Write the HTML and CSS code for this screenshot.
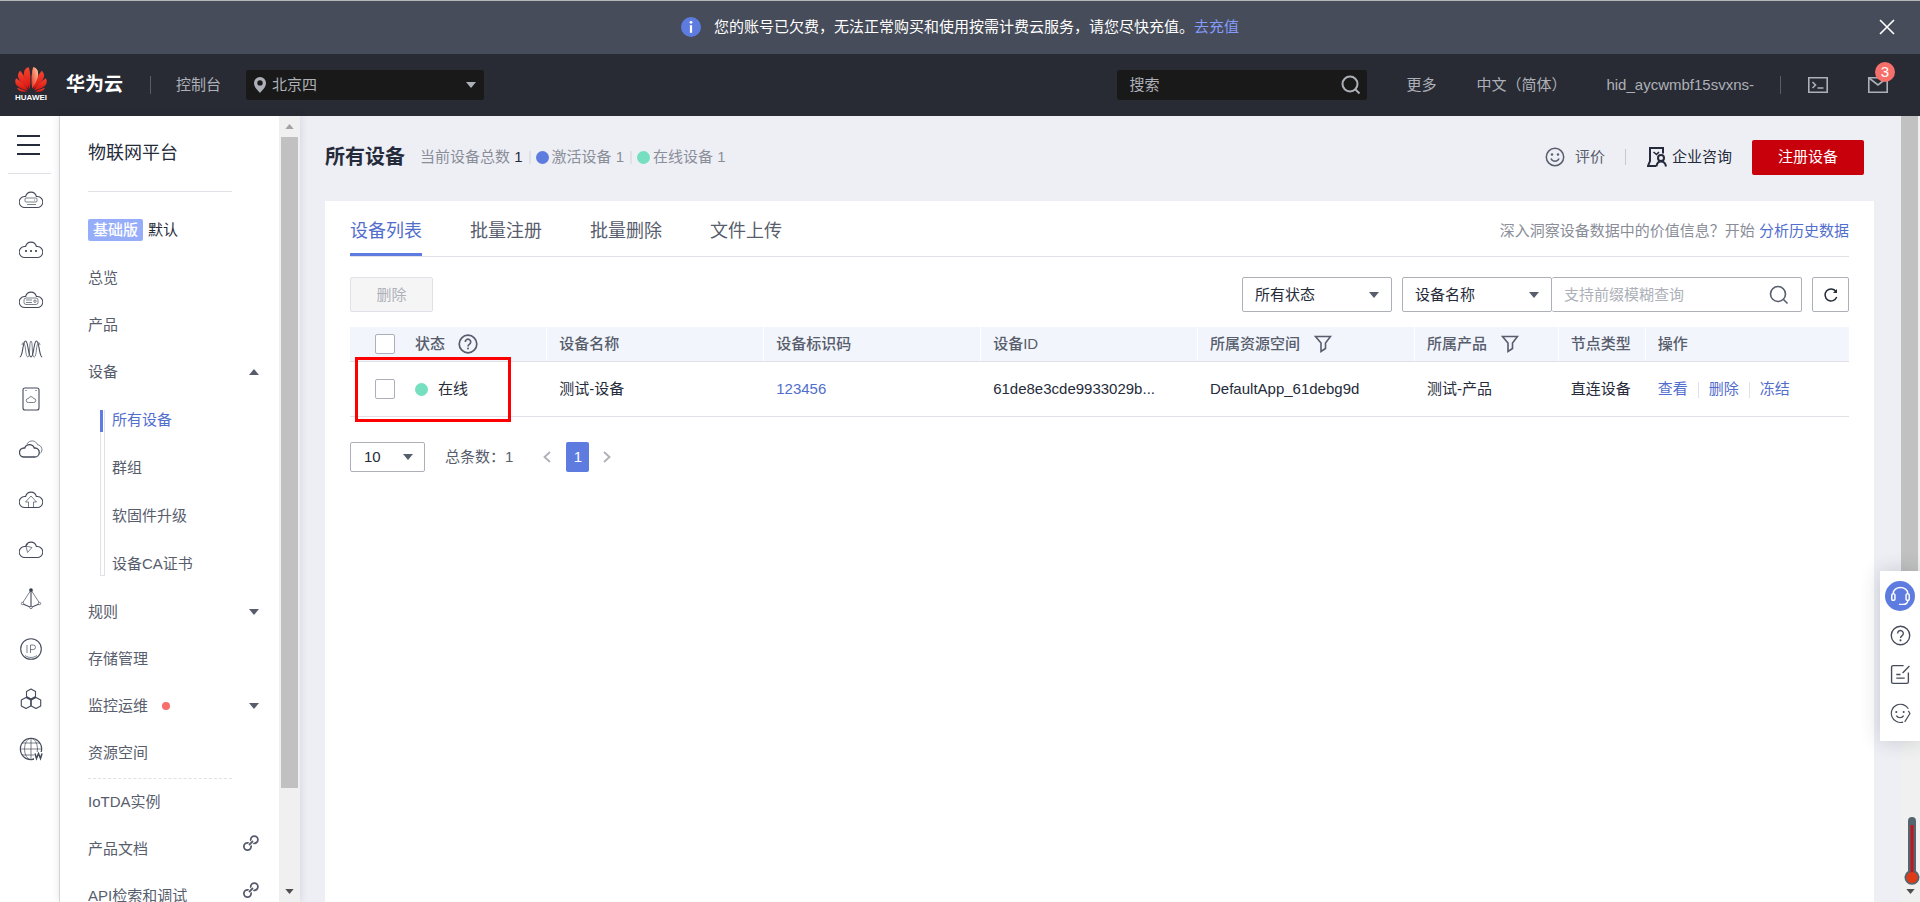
FILE: index.html
```html
<!DOCTYPE html>
<html lang="zh-CN">
<head>
<meta charset="utf-8">
<title>设备接入 - 所有设备</title>
<link rel="stylesheet" href="styles.css">
</head>
<body>
<svg class="defs" width="0" height="0" aria-hidden="true">
  <defs>
    <linearGradient id="petal" x1="0" y1="0" x2="0" y2="1"><stop offset="0" stop-color="#f6452f"/><stop offset="1" stop-color="#d8140f"/></linearGradient>
    <linearGradient id="petal-light" x1="1" y1="0" x2="0" y2="1"><stop offset="0" stop-color="#fbd0a8"/><stop offset="1" stop-color="#e8301f"/></linearGradient>
    <symbol id="cloud" viewBox="0 0 24 24"><path d="M6 20.5h12a5.5 5.5 0 0 0 .6-11h-1.200a5.600 6 0 0 0-10.800 0H5.400a5.500 5.500 0 0 0 .6 11z"/></symbol>
    <symbol id="caret" viewBox="0 0 10 6"><path d="M0 0h10L5 6z" fill="currentColor"/></symbol>
    <symbol id="funnel" viewBox="0 0 18 18"><path d="M1.500 1.500h15l-5 6.500v5.500L7 16.500V8z" fill="none" stroke="currentColor" stroke-width="1.600"/></symbol>
    <symbol id="search" viewBox="0 0 20 20"><g fill="none" stroke="currentColor"><circle cx="9" cy="9" r="7.500"/><path d="M14.500 14.500l4 4"/></g></symbol>
    <symbol id="chain" viewBox="0 0 16 16"><g fill="none" stroke="#575d6c" stroke-width="1.800"><circle cx="11.300" cy="4.700" r="3.600"/><circle cx="4.500" cy="11.500" r="3.600"/></g><path d="M6.300 9.700l3.500-3.500" stroke="#fff" stroke-width="3.600"/><path d="M6 10l4-4" stroke="#575d6c" stroke-width="1.800"/></symbol>
    <symbol id="help" viewBox="0 0 20 20"><circle cx="10" cy="10" r="8.800" fill="none" stroke="currentColor"/><path d="M7.300 8a2.700 2.700 0 1 1 4.300 2.100c-1 .7-1.600 1.100-1.600 2.300" fill="none" stroke="currentColor"/><circle cx="10" cy="14.600" r="1" fill="currentColor"/></symbol>
    <symbol id="wing" viewBox="0 0 32 25">
      <path d="M14.900 21.500C10.500 15 7.800 9 9.300 4c.8-2.300 2.700-3.500 4.600-3.700 1.700 6 1.800 13 1 21.200z"/>
      <path d="M13.900 22.300C8 18 2.300 12.500 3 7.800c.3-1.800 1.200-3.200 2.300-4C9.500 9 12.500 15 13.900 22.300z"/>
      <path d="M13 23.300C6.500 22 .8 19.500.3 15.200c-.2-1.700.2-3 .9-4 4.500 3 9 7.200 11.800 12.100z"/>
      <path d="M12.200 24.200c-3.200.9-6 .9-8-.6-1.100-.8-1.800-1.800-2.100-2.900 3.200 1.200 6.900 2.200 10.100 3.500z"/>
    </symbol>
  </defs>
</svg>

<div class="notice" role="alert">
  <svg class="notice-icon" viewBox="0 0 20 20"><circle cx="10" cy="10" r="10" fill="#5e7ce0"/><circle cx="10" cy="5.300" r="1.400" fill="#fff"/><path d="M10 8.200v7.600" stroke="#fff" stroke-width="2.200"/></svg>
  <span>您的账号已欠费，无法正常购买和使用按需计费云服务，请您尽快充值。<a class="notice-link" href="#">去充值</a></span>
  <button class="notice-close" type="button" aria-label="关闭"><svg viewBox="0 0 16 16"><path d="M1 1l14 14M15 1L1 15" stroke="#fff" stroke-width="1.600"/></svg></button>
</div>

<header class="topbar">
  <a class="logo" href="#">
    <svg class="logo-mark" viewBox="0 0 32 25">
      <g fill="url(#petal)">
        <use href="#wing" width="32" height="25"/>
        <use href="#wing" width="32" height="25" transform="translate(32 0) scale(-1 1)"/>
      </g>
      <path d="M17.100 21.500C21.500 15 24.200 9 22.700 4c-.8-2.300-2.700-3.500-4.600-3.700-1.700 6-1.800 13-1 21.200z" fill="url(#petal-light)"/>
    </svg>
    <span class="logo-text">HUAWEI</span>
  </a>
  <a class="brand" href="#">华为云</a>
  <span class="bar"></span>
  <a class="console" href="#">控制台</a>
  <label class="region">
    <svg class="pin" viewBox="0 0 12 16"><path d="M6 0a6 6 0 0 1 6 6c0 4-3.500 7-6 10C3.500 13 0 10 0 6a6 6 0 0 1 6-6zm0 3.200a2.700 2.700 0 1 0 0 5.400 2.700 2.700 0 0 0 0-5.400z" fill="#adb0b8" fill-rule="evenodd"/></svg>
    <select aria-label="区域"><option>北京四</option></select>
    <svg class="caret"><use href="#caret"/></svg>
  </label>
  <div class="top-right">
    <label class="top-search"><input type="text" placeholder="搜索" aria-label="搜索"><svg><use href="#search"/></svg></label>
    <a href="#">更多</a>
    <a href="#">中文（简体）</a>
    <a href="#">hid_aycwmbf15svxns-</a>
    <span class="bar bar-right"></span>
    <a class="top-icon" href="#" aria-label="命令行"><svg viewBox="0 0 20 20"><g fill="none" stroke="currentColor" stroke-width="1.600"><path d="M.8 2.800h18.400v14.400H.8z"/><path d="M4.500 7l3 3-3 3M9.500 13h6"/></g></svg></a>
    <a class="top-icon mail" href="#" aria-label="消息"><svg viewBox="0 0 20 20"><g fill="none" stroke="currentColor" stroke-width="1.600"><path d="M.8 2.800h18.400v14.400H.8z"/><path d="M1 3l9 7 9-7"/></g></svg><span class="badge">3</span></a>
  </div>
</header>

<div class="body">
  <nav class="rail" aria-label="服务">
    <button class="menu" type="button" aria-label="菜单"><span></span><span></span><span></span></button>
    <ul>
      <li><a href="#" aria-label="弹性云服务器"><svg viewBox="0 0 24 24"><use href="#cloud"/><g class="thin"><rect x="6" y="11" width="12" height="4" rx="1"/><path d="M8 17.500h9M15 13h1"/></g></svg></a></li>
      <li><a href="#" aria-label="云服务"><svg viewBox="0 0 24 24"><use href="#cloud"/><g fill="currentColor" stroke="none"><circle cx="7" cy="14" r="1"/><circle cx="12" cy="14" r="1"/><circle cx="17" cy="14" r="1"/></g></svg></a></li>
      <li><a href="#" aria-label="裸金属服务器"><svg viewBox="0 0 24 24"><use href="#cloud"/><g class="thin"><rect x="5" y="11" width="14" height="6.500" rx="2"/><path d="M7 13h6M7 15.500h6"/><circle cx="16" cy="14.200" r="1.200"/></g></svg></a></li>
      <li><a href="#" aria-label="弹性伸缩"><svg viewBox="0 0 24 24"><path d="M.8 20C4 20 3.500 4 6.500 4s2.500 16 5.500 16 2.500-16 5.500-16 2.500 16 5.700 16"/><path class="thin" d="M3 8c1-5 3-1 3.500 4s1 8 2.500 8C11.500 20 10 4 12 4s.5 16 3 16c1.500 0 2-3 2.500-8S20 3 21 8"/></svg></a></li>
      <li><a href="#" aria-label="云硬盘"><svg viewBox="0 0 24 24"><rect x="4" y="1" width="16" height="22" rx="2"/><path d="M6.500 3.500h1M16.500 3.500h1"/><path class="thin" d="M9.500 15.500h5a2 2 0 0 0 .5-4h-.5a2.600 2.600 0 0 0-5 0H9a2 2 0 0 0 .5 4z"/></svg></a></li>
      <li><a href="#" aria-label="虚拟私有云"><svg viewBox="0 0 24 24"><path d="M5 20h10.500a4.500 4.500 0 0 0 .5-9h-.8a5 5 0 0 0-9.400 0H5a4.500 4.500 0 0 0 0 9z" stroke-width="1.300"/><path class="thin" d="M8 7c2.500-4.500 9-4 10.500.8C23 8 24.500 14 21 16.500"/></svg></a></li>
      <li><a href="#" aria-label="对象存储"><svg viewBox="0 0 24 24"><use href="#cloud"/><path class="thin" d="M9.500 20v-5h-3L12 9l5.500 6h-3v5"/></svg></a></li>
      <li><a href="#" aria-label="云监控"><svg viewBox="0 0 24 24"><use href="#cloud"/><path class="thin" d="M7 9l6 1.500L8.500 15.500zM7 9l2-2"/></svg></a></li>
      <li><a href="#" aria-label="弹性负载均衡"><svg viewBox="0 0 24 24"><path class="thin" d="M12 3L3.500 16M12 3l8.500 13"/><path d="M12 3v17M4 17l8 3.500 8-3.500"/><circle cx="12" cy="3" r="1.300" fill="currentColor"/><g fill="#fff" class="thin"><circle cx="3.500" cy="16.500" r="1.200"/><circle cx="20.500" cy="16.500" r="1.200"/><circle cx="12" cy="20.500" r="1.200"/></g></svg></a></li>
      <li><a href="#" aria-label="弹性公网"><svg viewBox="0 0 24 24"><circle cx="12" cy="12" r="10.300"/><path class="thin" d="M6 18.500c3.500 2.600 8.500 2.600 12 0"/><path class="thin" d="M8 8v8M11.500 16V8h2.700a2.300 2.300 0 0 1 0 4.600h-2.700"/></svg></a></li>
      <li><a href="#" aria-label="区块链"><svg viewBox="0 0 24 24"><path d="M12 2l4.500 2.500v5L12 12 7.500 9.500v-5zM7 10.500l4.700 2.500v6L7 21.500 2.300 19v-6zM17 10.500l4.700 2.500v6L17 21.500 12.300 19v-6z" stroke-linejoin="round"/></svg></a></li>
      <li><a href="#" aria-label="域名"><svg viewBox="0 0 24 24"><circle cx="12" cy="12" r="10.700"/><path class="thin" d="M12 1v22M1 12h22M3 6h18M3 18h12"/><ellipse class="thin" cx="12" cy="12" rx="6.500" ry="10.700"/><path d="M15 15h9v8h-9z" fill="#fff" stroke="none"/><path d="M16 16.500l1.500 5 2-5 2 5 1.500-5" stroke-width="1.500"/></svg></a></li>
    </ul>
  </nav>

  <nav class="side" aria-label="物联网平台">
    <div class="side-content">
      <h2 class="side-title">物联网平台</h2>
      <div class="instance"><span class="tag">基础版</span>默认</div>
      <ul class="side-list">
        <li><a href="#">总览</a></li>
        <li><a href="#">产品</a></li>
        <li><a href="#">设备<svg class="caret up"><use href="#caret"/></svg></a>
          <ul class="sub-list">
            <li><a class="active" href="#">所有设备</a></li>
            <li><a href="#">群组</a></li>
            <li><a href="#">软固件升级</a></li>
            <li><a href="#">设备CA证书</a></li>
          </ul>
        </li>
        <li><a href="#">规则<svg class="caret"><use href="#caret"/></svg></a></li>
        <li><a href="#">存储管理</a></li>
        <li><a href="#">监控运维<span class="new-dot"></span><svg class="caret"><use href="#caret"/></svg></a></li>
        <li><a href="#">资源空间</a></li>
      </ul>
      <hr class="dashed">
      <ul class="side-list">
        <li><a href="#">IoTDA实例</a></li>
        <li><a href="#">产品文档<svg class="chain"><use href="#chain"/></svg></a></li>
        <li><a href="#">API检索和调试<svg class="chain"><use href="#chain"/></svg></a></li>
      </ul>
    </div>
    <div class="scroll side-scroll" aria-hidden="true">
      <svg class="arrow up muted"><use href="#caret"/></svg>
      <div class="track"><div class="thumb"></div></div>
      <svg class="arrow"><use href="#caret"/></svg>
    </div>
  </nav>

  <main class="main">
    <div class="page-head">
      <h1>所有设备</h1>
      <p class="stats">
        <span>当前设备总数 <b>1</b></span>
        <span class="stat"><i class="dot blue"></i>激活设备 1</span>
        <span class="stat"><i class="dot"></i>在线设备 1</span>
      </p>
      <div class="page-actions">
        <a class="rate" href="#"><svg viewBox="0 0 20 20"><g fill="none" stroke="currentColor" stroke-width="1.500"><circle cx="10" cy="10" r="8.700"/><path d="M6 11.500c1.500 3.600 6.500 3.600 8 0"/></g><circle cx="7" cy="7.500" r="1.200" fill="currentColor"/><circle cx="13" cy="7.500" r="1.200" fill="currentColor"/></svg>评价</a>
        <a class="consult" href="#"><svg viewBox="0 0 20 20"><g fill="none" stroke="currentColor" stroke-width="2"><path d="M16 6.500V1H3v13l-2 5h8"/><path d="M6.500 5l3 2.500L12 5" stroke-width="1.600"/><circle cx="14" cy="11" r="3"/><path d="M9.500 19.500c.3-3 2-5 4.500-5s4.500 2 5 5"/></g></svg>企业咨询</a>
        <button class="primary" type="button">注册设备</button>
      </div>
    </div>

    <section class="card">
      <div class="tabs">
        <a class="active" href="#">设备列表</a>
        <a href="#">批量注册</a>
        <a href="#">批量删除</a>
        <a href="#">文件上传</a>
        <p class="hint">深入洞察设备数据中的价值信息？开始 <a class="link" href="#">分析历史数据</a></p>
      </div>

      <div class="toolbar">
        <button class="delete" type="button" disabled>删除</button>
        <label class="select status-select"><select aria-label="状态"><option>所有状态</option></select><svg class="caret"><use href="#caret"/></svg></label>
        <div class="search-group">
          <label class="select"><select aria-label="搜索字段"><option>设备名称</option></select><svg class="caret"><use href="#caret"/></svg></label>
          <label class="search-box"><input type="text" placeholder="支持前缀模糊查询" aria-label="搜索设备"><svg><use href="#search"/></svg></label>
        </div>
        <button class="refresh" type="button" aria-label="刷新"><svg viewBox="0 0 16 16"><path d="M13 4.500A6 6 0 1 0 13.700 10" fill="none" stroke="currentColor" stroke-width="1.500"/><path d="M14 2v4h-4z" fill="currentColor"/></svg></button>
      </div>

      <div class="table-wrap">
        <table>
          <colgroup><col class="c-status"><col class="c-wide"><col class="c-wide"><col class="c-wide"><col class="c-wide"><col class="c-product"><col class="c-type"><col></colgroup>
          <thead>
            <tr>
              <th><div class="cell"><input type="checkbox" aria-label="全选">状态<svg class="help"><use href="#help"/></svg></div></th>
              <th>设备名称</th>
              <th>设备标识码</th>
              <th>设备ID</th>
              <th><div class="cell">所属资源空间<svg class="funnel"><use href="#funnel"/></svg></div></th>
              <th><div class="cell">所属产品<svg class="funnel"><use href="#funnel"/></svg></div></th>
              <th>节点类型</th>
              <th>操作</th>
            </tr>
          </thead>
          <tbody>
            <tr>
              <td><div class="cell"><input type="checkbox" aria-label="选择 测试-设备"><i class="dot"></i>在线</div></td>
              <td>测试-设备</td>
              <td><a class="link" href="#">123456</a></td>
              <td>61de8e3cde9933029b...</td>
              <td>DefaultApp_61debg9d</td>
              <td>测试-产品</td>
              <td>直连设备</td>
              <td><div class="ops"><a class="link" href="#">查看</a><a class="link" href="#">删除</a><a class="link" href="#">冻结</a></div></td>
            </tr>
          </tbody>
        </table>
        <div class="highlight"></div>
      </div>

      <div class="pager">
        <label class="select"><select aria-label="每页条数"><option>10</option></select><svg class="caret"><use href="#caret"/></svg></label>
        <span class="total">总条数：1</span>
        <button class="step" type="button" aria-label="上一页"><svg viewBox="0 0 8 12"><path d="M7 1L1.500 6 7 11" fill="none" stroke="currentColor" stroke-width="1.800"/></svg></button>
        <button class="page" type="button">1</button>
        <button class="step" type="button" aria-label="下一页"><svg viewBox="0 0 8 12"><path d="M1 1l5.500 5L1 11" fill="none" stroke="currentColor" stroke-width="1.800"/></svg></button>
      </div>
    </section>
  </main>

  <div class="scroll page-scroll" aria-hidden="true">
    <div class="track"><div class="thumb"></div></div>
    <svg class="arrow"><use href="#caret"/></svg>
  </div>
</div>

<aside class="float">
  <a class="service" href="#" aria-label="客服"><svg viewBox="0 0 20 20"><g fill="none" stroke="#fff" stroke-width="1.400"><path d="M3 7.500c0-8 14-8 14 0"/><rect x="1.700" y="7.500" width="3" height="6" rx="1"/><rect x="15.300" y="7.500" width="3" height="6" rx="1"/><path d="M17 13.500c0 2.500-2 4-5 4H8.500"/></g></svg></a>
  <a href="#" aria-label="帮助"><svg class="float-help" viewBox="0 0 20 20"><use href="#help"/></svg></a>
  <a href="#" aria-label="建议"><svg viewBox="0 0 20 20"><g fill="none" stroke="currentColor" stroke-width="1.300"><path d="M13 1.500H3a1.500 1.500 0 0 0-1.500 1.500v14A1.500 1.500 0 0 0 3 18.500h13a1.500 1.500 0 0 0 1.500-1.500V8"/><path d="M18.500 2L12 8.500M6 10h4M6 13.500h8"/></g></svg></a>
  <a href="#" aria-label="满意度"><svg viewBox="0 0 20 20"><g fill="none" stroke="currentColor" stroke-width="1.100"><path d="M12.500 18.200A8.700 8.700 0 1 1 17.500 5.500M14 18l5-8-1.500-2.500"/><path d="M6 12c1.500 2.700 5.500 2.700 7 0"/></g><circle cx="6" cy="8.500" r="1" fill="currentColor"/><circle cx="13" cy="8.500" r="1" fill="currentColor"/></svg></a>
</aside>
<svg class="thermo" viewBox="0 0 16 70"><path d="M4 5a4 4 0 0 1 8 0v50a7.500 7.500 0 1 1-8 0z" fill="#546570"/><rect x="6.500" y="9" width="3" height="50" fill="#c3161c"/><circle cx="8" cy="61.500" r="5.500" fill="#e03a17"/></svg>
</body>
</html>
```

FILE: styles.css
```css
* { box-sizing: border-box; }

body {
  margin: 0;
  height: 100vh;
  display: flex;
  flex-direction: column;
  overflow: hidden;
  background: #eeeff5;
  color: #252b3a;
  font: 15px/20px "Liberation Sans", "Noto Sans CJK SC", sans-serif;
}

a { color: inherit; text-decoration: none; }
ul { list-style: none; margin: 0; padding: 0; }
h1, h2, p { margin: 0; font-weight: 400; }
button, input, select { font: inherit; color: inherit; margin: 0; }
button { padding: 0; border: 0; background: none; }
select { appearance: none; border: 0; background: none; outline: 0; padding: 0; }
svg { flex: none; display: block; }

.defs { position: absolute; }
.link { color: #526ecc; }
.caret { width: 10px; height: 6px; color: #575d6c; }
.up { transform: rotate(180deg); }

/* notice */
.notice {
  position: relative;
  flex: none;
  height: 54px;
  padding-bottom: 2px;
  display: flex;
  align-items: center;
  justify-content: center;
  gap: 13px;
  border-top: 1px solid #b4b8b8;
  background: #464c59;
  color: #fff;
}
.notice-icon { width: 20px; height: 20px; }
.notice-link { color: #859bff; }
.notice-close { position: absolute; right: 25px; top: 18px; }
.notice-close svg { width: 16px; height: 16px; }

/* top bar */
.topbar {
  flex: none;
  height: 62px;
  display: flex;
  align-items: center;
  padding: 0 32px 0 15px;
  background: #282b33;
  color: #adb0b8;
}
.logo { width: 32px; display: flex; flex-direction: column; align-items: center; gap: 1px; }
.logo-mark { width: 32px; height: 25px; }
.logo-text { color: #fff; font-weight: 700; font-size: 8px; line-height: 10px; }
.brand { margin-left: 19px; color: #fff; font-size: 19px; font-weight: 700; }
.bar { width: 1px; height: 18px; margin: 0 25px 0 27px; background: #575d6c; }
.region {
  width: 238px;
  height: 30px;
  margin-left: 25px;
  padding: 0 8px;
  display: flex;
  align-items: center;
  gap: 6px;
  border-radius: 3px;
  background: #191919;
}
.region select { flex: 1; }
.region .caret { color: #adb0b8; height: 8px; }
.pin { width: 12px; height: 16px; }
.top-right { margin-left: auto; display: flex; align-items: center; gap: 40px; }
.top-search {
  width: 250px;
  height: 30px;
  margin-right: -1px;
  padding: 0 6px 0 12px;
  display: flex;
  align-items: center;
  border-radius: 3px;
  background: #191919;
}
.top-search input { flex: 1; min-width: 0; border: 0; background: none; outline: 0; padding: 0; }
.top-search input::placeholder { color: #adb0b8; }
.top-search svg { width: 20px; height: 20px; stroke-width: 2; }
.bar-right { margin: 0 -13px 0 -14px; }
.top-icon svg { width: 20px; height: 20px; }
.mail { position: relative; }
.badge {
  position: absolute;
  left: 7px;
  top: -13px;
  width: 20px;
  height: 20px;
  border-radius: 10px;
  background: #f66f6a;
  color: #fff;
  text-align: center;
}

.body { flex: 1; min-height: 0; display: flex; }

/* icon rail */
.rail { flex: none; width: 60px; border-right: 1px solid #dfe1e6; background: #fff; }
.menu {
  width: 43px;
  height: 58px;
  margin: 0 8px;
  padding-left: 9px;
  display: flex;
  flex-direction: column;
  justify-content: center;
  gap: 7px;
  border-bottom: 1px solid #dfe1e6;
}
.menu span { width: 23px; height: 2px; background: #252b3a; }
.rail li { height: 50px; padding-left: 19px; display: flex; align-items: center; }
.rail svg { width: 24px; height: 24px; fill: none; stroke: #444a5a; stroke-width: 1.1; color: #252b3a; }
.rail .thin { stroke-width: 0.7; }

/* side navigation */
.side { flex: none; width: 240px; display: flex; background: #fff; box-shadow: 0 0 8px rgba(37, 43, 58, .15); }
.side-content { flex: 1; overflow: hidden; padding: 0 20px 0 28px; }
.side-title { width: 144px; font-size: 18px; line-height: 75px; border-bottom: 1px solid #dfe1e6; white-space: nowrap; }
.instance { height: 62px; padding-top: 14px; display: flex; align-items: center; gap: 5px; }
.tag { padding: 0 5px; line-height: 22px; border-radius: 2px; background: #96adfa; color: #fff; font-weight: 500; }
.side-list a { height: 47px; display: flex; align-items: center; color: #575d6c; }
.side-list a > svg { margin-left: auto; }
.sub-list { position: relative; padding-top: 1px; }
.sub-list::before {
  content: "";
  position: absolute;
  left: 12px;
  top: 15px;
  bottom: 12px;
  width: 3px;
  border: 1px solid #dfe1e6;
  border-top: 0;
}
.sub-list a { height: 48px; padding-left: 24px; }
.sub-list .active { position: relative; color: #526ecc; }
.sub-list .active::before {
  content: "";
  position: absolute;
  left: 12px;
  top: 14px;
  width: 3px;
  height: 22px;
  background: #5e7ce0;
}
.new-dot { width: 8px; height: 8px; margin-left: 14px; border-radius: 50%; background: #f66f6a; }
.dashed { width: 144px; margin: 2px 0 -1px; border: 0; border-top: 1px dashed #dfe1e6; }
.chain { width: 16px; height: 16px; align-self: flex-start; margin-top: 10px; }

/* scroll bars */
.scroll { flex: none; display: flex; flex-direction: column; background: #f0f0f0; }
.track { flex: 1; }
.thumb { background: #c1c1c1; }
.arrow { width: 9px; height: 5px; align-self: center; margin: 8px 0; color: #505050; }
.muted { color: #a3a3a3; }
.side-scroll { width: 21px; padding: 0 2px; }
.side-scroll .thumb { height: 87.5%; }
.page-scroll { width: 19px; }
.page-scroll .track { padding-right: 2px; }
.page-scroll .thumb { height: 60%; }

/* page */
.main { flex: 1; min-width: 0; display: flex; flex-direction: column; padding: 0 27px 0 25px; }
.page-head { height: 85px; padding: 0 10px 3px 0; display: flex; align-items: center; }
.page-head h1 { font-size: 20px; font-weight: 700; }
.stats { margin-left: 15px; display: flex; align-items: center; gap: 6px; color: #8a8e99; }
.stats b { color: #252b3a; font-weight: 400; }
.stat { display: flex; align-items: center; gap: 3px; }
.stat::before { content: ""; width: 2px; height: 13px; margin-right: 2px; background: #dfe1e6; }
.dot { width: 13px; height: 13px; border-radius: 50%; background: #76dfbf; }
.blue { background: #5e7ce0; }
.page-actions { margin-left: auto; display: flex; align-items: center; color: #575d6c; }
.rate { display: flex; align-items: center; gap: 10px; }
.rate svg, .consult svg { width: 20px; height: 20px; }
.consult { margin: 0 20px; display: flex; align-items: center; gap: 5px; color: #252b3a; }
.consult::before { content: ""; width: 1px; height: 16px; margin-right: 16px; background: #c6c9d0; }
.primary { width: 112px; height: 35px; border-radius: 2px; background: #c7000b; color: #fff; }

.card { flex: 1; padding: 5px 25px 0; background: #fff; }
.tabs { display: flex; gap: 48px; border-bottom: 1px solid #dfe1e6; color: #575d6c; line-height: 50px; }
.tabs > a { font-size: 18px; }
.tabs > .active { color: #526ecc; box-shadow: inset 0 -3px #5e7ce0; }
.hint { margin-left: auto; color: #8a8e99; }

.toolbar { display: flex; gap: 10px; margin: 20px 0 15px; height: 35px; }
.delete { width: 83px; border: 1px solid #dfe1e6; border-radius: 2px; background: #f5f5f6; color: #adb0b8; }
.select {
  width: 150px;
  padding: 0 12px;
  display: flex;
  align-items: center;
  border: 1px solid #adb0b8;
  border-radius: 2px;
}
.select select { flex: 1; min-width: 0; }
.status-select { margin-left: auto; }
.search-group { display: flex; }
.search-box {
  width: 250px;
  padding: 0 12px;
  display: flex;
  align-items: center;
  border: 1px solid #adb0b8;
  border-left: 0;
  border-radius: 2px;
}
.search-box input { flex: 1; min-width: 0; border: 0; outline: 0; padding: 0; }
.search-box input::placeholder { color: #adb0b8; }
.search-box svg { width: 20px; height: 20px; color: #575d6c; stroke-width: 1.6; }
.refresh { width: 37px; display: grid; place-items: center; border: 1px solid #adb0b8; border-radius: 2px; }
.refresh svg { width: 16px; height: 16px; }

.table-wrap { position: relative; }
table { width: 100%; table-layout: fixed; border-spacing: 0; }
th, td { height: 35px; padding: 0 0 0 13px; border-bottom: 1px solid #dfe1e6; text-align: left; white-space: nowrap; }
th { background: #f2f5fc; color: #575d6c; font-weight: 500; }
th + th { box-shadow: inset 1px 0 #fff; }
td { height: 55px; }
th:first-child, td:first-child { padding-left: 25px; }
.c-status { width: 13.1%; }
.c-wide { width: 14.47%; }
.c-product { width: 9.6%; }
.c-type { width: 5.8%; }
.cell { display: flex; align-items: center; }
.cell input {
  appearance: none;
  width: 20px;
  height: 20px;
  margin-right: 20px;
  border: 1px solid #adb0b8;
  border-radius: 2px;
  background: #fff;
}
.cell .dot { margin-right: 10px; }
.help { width: 20px; height: 20px; margin-left: 13px; stroke-width: 1.7; }
.funnel { width: 18px; height: 18px; margin-left: 14px; }
.ops { display: flex; align-items: center; }
.ops a + a::before {
  content: "";
  display: inline-block;
  width: 1px;
  height: 16px;
  margin: 0 10px;
  vertical-align: middle;
  background: #dfe1e6;
}
.highlight {
  position: absolute;
  left: 5px;
  top: 30px;
  width: 156px;
  height: 65px;
  border: 3px solid #f00;
  pointer-events: none;
}

.pager { display: flex; align-items: center; margin-top: 25px; color: #575d6c; }
.pager .select { width: 75px; height: 30px; padding: 0 11px 0 13px; color: #252b3a; }
.total { margin: 0 28px 0 20px; }
.step { width: 12px; color: #adb0b8; display: grid; place-items: center; }
.step svg { width: 8px; height: 12px; }
.page { width: 23px; height: 30px; margin: 0 12px 0 13px; border-radius: 2px; background: #5e7ce0; color: #fff; }

/* floating helpers */
.float {
  position: fixed;
  right: 0;
  bottom: 161px;
  width: 40px;
  padding: 10px 5px 13px;
  display: flex;
  flex-direction: column;
  gap: 9px;
  background: #fff;
  box-shadow: 0 0 20px rgba(37, 43, 58, .2);
  color: #464c59;
}
.float a { height: 30px; display: grid; place-items: center; }
.float svg { width: 21px; height: 21px; }
.float-help { stroke-width: 1.3; }
.service { border-radius: 50%; background: #5e7ce0; }
.thermo { position: fixed; right: 0; bottom: 16px; width: 16px; height: 70px; }
```
